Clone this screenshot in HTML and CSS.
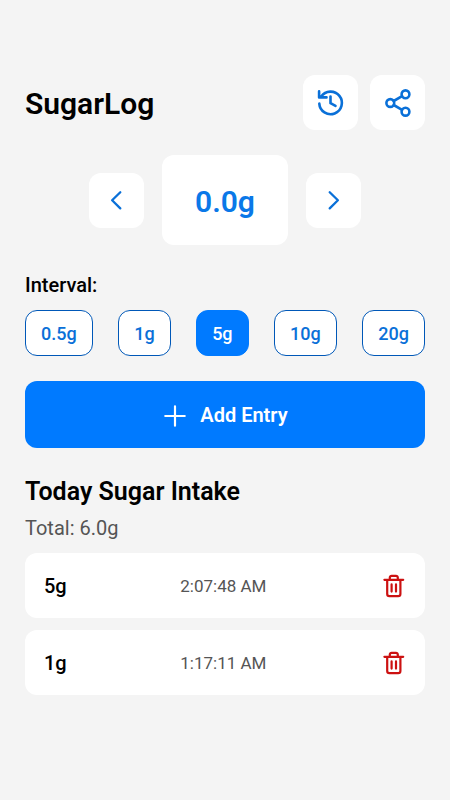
FILE: index.html
```html
<!DOCTYPE html>
<html lang="en">
<head>
<meta charset="utf-8">
<meta name="viewport" content="width=device-width, initial-scale=1">
<title>SugarLog</title>
<link rel="stylesheet" href="styles.css">
</head>
<body>
<main class="app">
  <header class="header">
    <h1 class="title">SugarLog</h1>
    <div class="actions">
      <button class="tile" type="button" aria-label="History">
        <svg class="icon bold" viewBox="0 0 30 30"><path d="M3.3 15.6A11.3 11.3 0 1 0 5.2 8.6M3.1 3.4v6h7.4M14.5 8.6v6.6l5 2.6"/></svg>
      </button>
      <button class="tile" type="button" aria-label="Share">
        <svg class="icon bold" viewBox="0 0 30 30"><circle cx="7.3" cy="15" r="3.9"/><circle cx="22.5" cy="6.3" r="3.9"/><circle cx="22.5" cy="23.7" r="3.9"/><path d="m10.7 13 8.4-4.8M10.7 17l8.4 4.8"/></svg>
      </button>
    </div>
  </header>

  <section class="counter" aria-label="Amount">
    <button class="tile" type="button" aria-label="Decrease">
      <svg class="icon" viewBox="0 0 30 30"><path d="m18.3 7.2-8.2 8.1 8.2 8.1"/></svg>
    </button>
    <output class="amount">0.0g</output>
    <button class="tile" type="button" aria-label="Increase">
      <svg class="icon" viewBox="0 0 30 30"><path d="m11.7 7.2 8.2 8.1-8.2 8.1"/></svg>
    </button>
  </section>

  <section class="interval" aria-labelledby="interval-label">
    <h2 class="label" id="interval-label">Interval:</h2>
    <div class="chips">
      <button class="chip" type="button">0.5g</button>
      <button class="chip" type="button">1g</button>
      <button class="chip selected" type="button" aria-pressed="true">5g</button>
      <button class="chip" type="button">10g</button>
      <button class="chip" type="button">20g</button>
    </div>
  </section>

  <button class="add" type="button">
    <svg class="plus" viewBox="0 0 24 24"><path d="M12 3v18M3 12h18"/></svg>
    <span>Add Entry</span>
  </button>

  <section>
    <h2 class="heading">Today Sugar Intake</h2>
    <p class="total">Total: 6.0g</p>
    <ul class="entries">
      <li class="entry">
        <span class="grams">5g</span>
        <time class="time">2:07:48 AM</time>
        <button class="delete" type="button" aria-label="Delete 5g entry">
          <svg class="trash" viewBox="0 0 26 26"><path d="M4.4 6.8h18.8M7.2 6.8v14.1a2.2 2.2 0 0 0 2.2 2.2h8.8a2.2 2.2 0 0 0 2.2-2.2V6.8M9.8 6.5V4.6a1.8 1.8 0 0 1 1.8-1.8H16a1.8 1.8 0 0 1 1.8 1.8v1.9M11.6 11.4v7.2M16 11.4v7.2"/></svg>
        </button>
      </li>
      <li class="entry">
        <span class="grams">1g</span>
        <time class="time">1:17:11 AM</time>
        <button class="delete" type="button" aria-label="Delete 1g entry">
          <svg class="trash" viewBox="0 0 26 26"><path d="M4.4 6.8h18.8M7.2 6.8v14.1a2.2 2.2 0 0 0 2.2 2.2h8.8a2.2 2.2 0 0 0 2.2-2.2V6.8M9.8 6.5V4.6a1.8 1.8 0 0 1 1.8-1.8H16a1.8 1.8 0 0 1 1.8 1.8v1.9M11.6 11.4v7.2M16 11.4v7.2"/></svg>
        </button>
      </li>
    </ul>
  </section>
</main>
</body>
</html>
```
FILE: styles.css
```css
* {
  box-sizing: border-box;
}

body {
  margin: 0;
  background: #f4f4f4;
  color: #000;
  font-family: Roboto, "Liberation Sans", sans-serif;
}

h1, h2, p, ul {
  margin: 0;
  padding: 0;
}

button {
  margin: 0;
  padding: 0;
  border: 0;
  font-family: inherit;
  cursor: pointer;
}

svg {
  display: block;
  fill: none;
  stroke: currentColor;
  stroke-linecap: round;
  stroke-linejoin: round;
}

.app {
  padding: 75px 25px 25px;
}

.header {
  display: flex;
  align-items: center;
  justify-content: space-between;
}

.title {
  padding-top: 2px;
  font-size: 30px;
  line-height: 36px;
  font-weight: 600;
}

.actions {
  display: flex;
  gap: 12px;
}

.tile {
  display: grid;
  place-items: center;
  width: 55px;
  height: 55px;
  border-radius: 12px;
  background: #fff;
  color: #0a70d8;
}

.icon {
  width: 30px;
  height: 30px;
  stroke-width: 2.3;
}

.icon.bold {
  stroke-width: 2.6;
}

.counter {
  display: flex;
  align-items: center;
  justify-content: center;
  gap: 18px;
  margin-top: 25px;
}

.amount {
  padding: 27px 33px 23px;
  border-radius: 12px;
  background: #fff;
  color: #0a78e8;
  font-size: 30px;
  line-height: 40px;
  font-weight: 600;
}

.interval {
  margin-top: 28px;
}

.label {
  font-size: 20px;
  line-height: 24px;
  font-weight: 500;
}

.chips {
  display: flex;
  justify-content: space-between;
  margin-top: 13px;
}

.chip {
  padding: 12px 15px 10px;
  border: 1px solid #0058b8;
  border-radius: 12px;
  background: #fff;
  color: #0a70d8;
  font-size: 18px;
  line-height: 22px;
  font-weight: 500;
}

.chip.selected {
  border-color: #007aff;
  background: #007aff;
  color: #fff;
}

.add {
  display: flex;
  align-items: center;
  justify-content: center;
  gap: 12px;
  width: 100%;
  margin-top: 25px;
  padding: 21px 20px 19px;
  border-radius: 12px;
  background: #007aff;
  color: #fff;
  font-size: 20px;
  line-height: 27px;
  font-weight: 600;
}

.plus {
  width: 26px;
  height: 26px;
  stroke-width: 2;
}

.heading {
  margin-top: 28px;
  font-size: 25px;
  line-height: 32px;
  font-weight: 600;
}

.total {
  margin-top: 8px;
  color: #555;
  font-size: 20px;
  line-height: 24px;
}

.entries {
  display: grid;
  gap: 12px;
  margin-top: 13px;
  list-style: none;
}

.entry {
  display: flex;
  align-items: center;
  justify-content: space-between;
  padding: 18px 19px;
  border-radius: 12px;
  background: #fff;
}

.grams {
  padding-top: 2px;
  font-size: 20px;
  line-height: 27px;
  font-weight: 500;
}

.time {
  color: #555;
  font-size: 17px;
  line-height: 24px;
}

.delete {
  background: none;
  color: #cc1111;
}

.trash {
  width: 26px;
  height: 26px;
  stroke-width: 2.2;
}
```
